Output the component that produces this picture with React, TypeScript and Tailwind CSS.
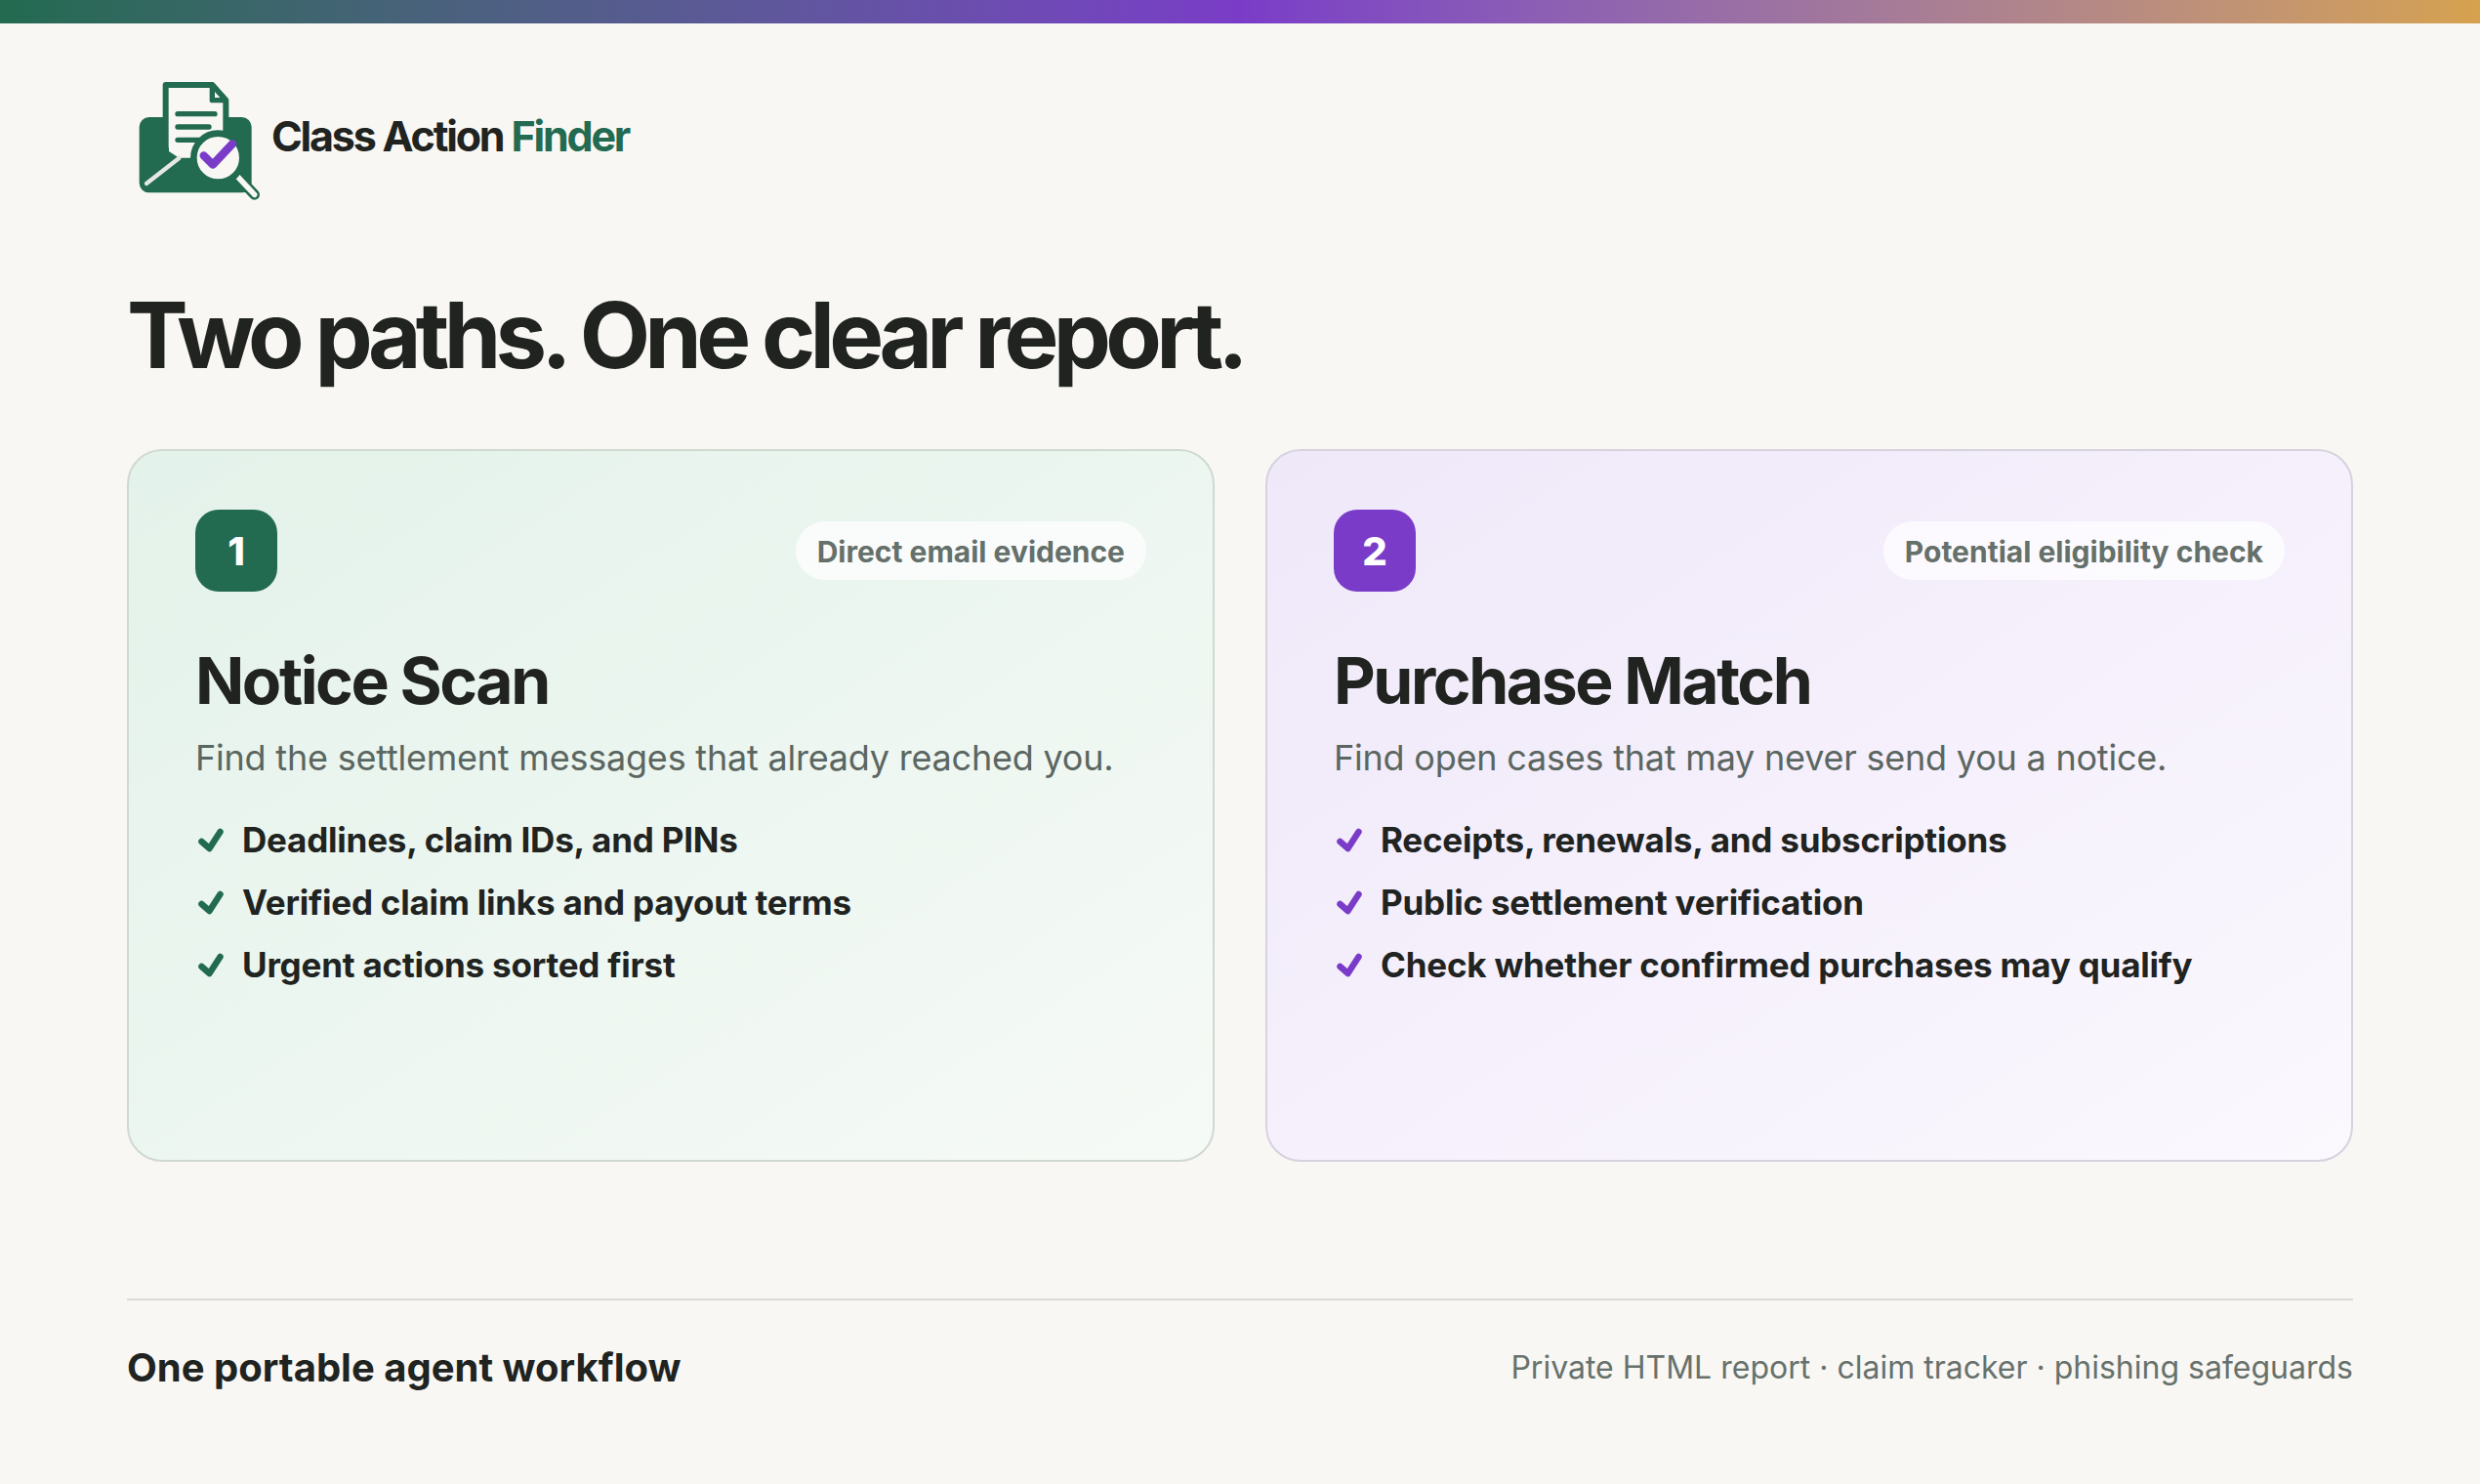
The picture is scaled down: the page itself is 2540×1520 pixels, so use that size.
import React from 'react';

const paths = [
  {
    num: '1',
    tag: 'Direct email evidence',
    title: 'Notice Scan',
    sub: 'Find the settlement messages that already reached you.',
    items: ['Deadlines, claim IDs, and PINs', 'Verified claim links and payout terms', 'Urgent actions sorted first'],
    card: 'bg-gradient-to-br from-[#e3f2ea] to-[#f6faf6] border-[#d0d9d1]',
    badge: 'bg-[#226a50]',
    check: '#226a50',
  },
  {
    num: '2',
    tag: 'Potential eligibility check',
    title: 'Purchase Match',
    sub: 'Find open cases that may never send you a notice.',
    items: ['Receipts, renewals, and subscriptions', 'Public settlement verification', 'Check whether confirmed purchases may qualify'],
    card: 'bg-gradient-to-br from-[#efe8f9] to-[#fbf8fe] border-[#d6d3de]',
    badge: 'bg-[#7a3cc8]',
    check: '#7a3cc8',
  },
];

function Logo() {
  return (
    <svg viewBox="0 0 450 450" className="w-[150px] h-[150px] shrink-0">
      <rect x="38" y="180" width="345" height="232" rx="30" fill="#226a50" />
      <path d="M119 81 H262 L304 128 V300 H150 L119 278 Z" fill="#f8f7f3" stroke="#226a50" strokeWidth="18" strokeLinejoin="round" />
      <path d="M262 81 V128 H304 Z" fill="#f8f7f3" stroke="#226a50" strokeWidth="16" strokeLinejoin="round" />
      <path d="M129 180 V285 L160 305 H200 V180 Z" fill="#f8f7f3" />
      <path d="M156 170 H270 M156 210 H252 M156 250 H225" stroke="#226a50" strokeWidth="16" strokeLinecap="round" />
      <path d="M160 306 L60 384" stroke="#e6e8e4" strokeWidth="13" strokeLinecap="round" />
      <path d="M332 354 L392 418" stroke="#226a50" strokeWidth="32" strokeLinecap="round" />
      <path d="M332 354 L392 418" stroke="#f8f7f3" strokeWidth="17" strokeLinecap="round" />
      <circle cx="280" cy="305" r="75" fill="#f8f7f3" stroke="#226a50" strokeWidth="20" />
      <path d="M236 298 L264 326 L324 262" fill="none" stroke="#7a3cc8" strokeWidth="25" strokeLinecap="round" strokeLinejoin="round" />
    </svg>
  );
}

function Check({ color }: { color: string }) {
  return (
    <svg viewBox="0 0 30 26" className="w-[30px] h-[26px] shrink-0">
      <path d="M6.5 14 L14.5 21 L25.5 4" fill="none" stroke={color} strokeWidth="6.5" strokeLinecap="round" strokeLinejoin="round" />
    </svg>
  );
}

export default function App() {
  return (
    <div className="w-[2540px] h-[1520px] overflow-hidden bg-[#f8f7f3] font-['Inter',sans-serif] text-[#20231f]">
      <div className="h-6 bg-gradient-to-r from-[#226a50] via-[#7a3cc8] to-[#d6a24e]" />
      <main className="px-[130px]">
        <div className="flex items-center mt-9 h-[150px]">
          <Logo />
          <div className="-ml-[2px] text-[43px] font-bold tracking-[-0.051em] leading-none mt-2">
            Class Action <span className="text-[#226a50]">Finder</span>
          </div>
        </div>
        <h1 className="mt-[78px] mb-[62px] text-[94px] leading-[110px] font-bold tracking-[-0.061em]">Two paths. One clear report.</h1>
        <div className="grid grid-cols-2 gap-[52px]">
          {paths.map((p) => (
            <section key={p.num} className={`h-[730px] rounded-[36px] border-2 px-[68px] pt-[60px] ${p.card}`}>
              <div className="flex items-center justify-between">
                <div className={`w-[84px] h-[84px] pt-[2px] rounded-[24px] flex items-center justify-center text-white text-[40px] font-extrabold ${p.badge}`}>
                  {p.num}
                </div>
                <div className="h-[60px] px-[22px] pt-[2px] rounded-full bg-white/70 flex items-center text-[30px] font-[650] text-[#65706b]">
                  {p.tag}
                </div>
              </div>
              <h2 className="mt-[51px] text-[66px] leading-[80px] font-bold tracking-[-0.037em]">{p.title}</h2>
              <p className="mt-[15px] text-[36px] leading-[48px] tracking-[-0.006em] text-[#5b6661]">{p.sub}</p>
              <ul className="mt-9 flex flex-col gap-4">
                {p.items.map((it) => (
                  <li key={it} className="flex items-center gap-[18px] h-12 pt-[1px] text-[35px] font-[650] tracking-[-0.006em]">
                    <Check color={p.check} />
                    {it}
                  </li>
                ))}
              </ul>
            </section>
          ))}
        </div>
        <footer className="mt-[140px] border-t-2 border-[#dcdbd5] flex items-center justify-between h-[140px]">
          <div className="text-[40px] font-bold">One portable agent workflow</div>
          <div className="text-[32px] text-[#67716c]">Private HTML report · claim tracker · phishing safeguards</div>
        </footer>
      </main>
    </div>
  );
}
